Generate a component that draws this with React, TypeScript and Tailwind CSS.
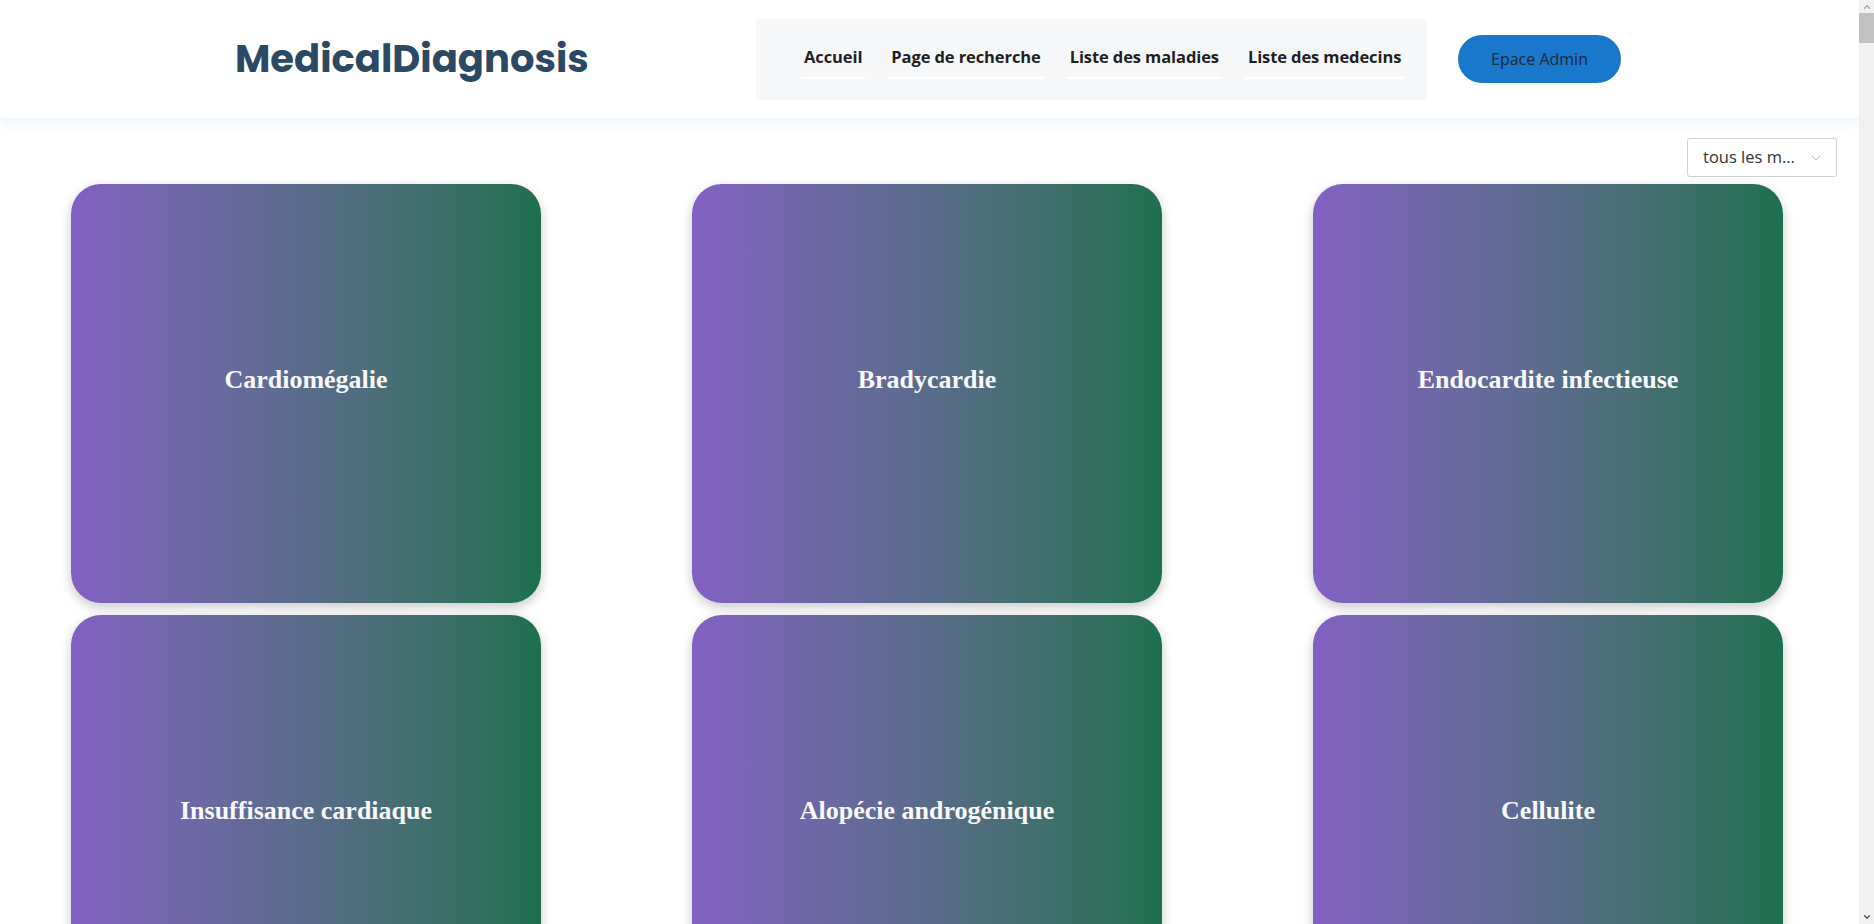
import { ChevronDown, ChevronUp } from "lucide-react";

const maladies = [
  "Cardiomégalie",
  "Bradycardie",
  "Endocardite infectieuse",
  "Insuffisance cardiaque",
  "Alopécie androgénique",
  "Cellulite",
  "Eczéma",
  "Psoriasis",
  "Urticaire",
];

const liens = ["Accueil", "Page de recherche", "Liste des maladies", "Liste des medecins"];

function Header() {
  return (
    <header className="relative z-10 flex h-[118px] items-center bg-white shadow-[0_2px_15px_rgba(25,119,204,0.12)]">
      <div className="w-[756px] shrink-0 pl-[235px]">
        <h1 className="whitespace-nowrap font-['Poppins','Open_Sans',sans-serif] text-[38.5px] font-bold leading-none text-[#2c4964]">
          MedicalDiagnosis
        </h1>
      </div>
      <nav className="flex h-[81px] w-[671px] shrink-0 items-center gap-[23px] bg-[#f6f7f9] pl-[45px] pt-[6px]">
        {liens.map((l) => (
          <a
            key={l}
            href="#"
            className="whitespace-nowrap border-b-2 border-white px-[3px] pb-[7px] font-['Open_Sans',sans-serif] text-[16.5px] font-bold tracking-[-0.1px] text-[#1f1f1f]"
          >
            {l}
          </a>
        ))}
      </nav>
      <button className="ml-[31px] h-[48px] w-[163px] shrink-0 rounded-full bg-[#1977cc] font-['Open_Sans',sans-serif] text-[16px] text-[#1c2a3a]">
        Epace Admin
      </button>
    </header>
  );
}

function Carte({ nom }: { nom: string }) {
  return (
    <div className="flex h-[419px] w-[470px] items-center justify-center rounded-[30px] bg-gradient-to-r from-[#8360c3] to-[#1d6f4f] pb-[28px] shadow-[0_4px_12px_rgba(0,0,0,0.22)]">
      <h2 className="font-['Liberation_Serif',serif] text-[26px] font-bold text-[#f8f8fb]">{nom}</h2>
    </div>
  );
}

// barre de défilement dessinée (fenêtre du navigateur)
function Scrollbar() {
  return (
    <div className="fixed right-0 top-0 z-20 flex h-screen w-[15px] flex-col items-center bg-[#f1f1f1]">
      <ChevronUp size={10} strokeWidth={3} className="mt-[2px] text-[#a3a3a3]" />
      <div className="mt-[1px] h-[30px] w-[15px] bg-[#c1c1c1]" />
      <div className="flex-1" />
      <ChevronDown size={10} strokeWidth={3} className="mb-[2px] text-[#505050]" />
    </div>
  );
}

export default function App() {
  return (
    <div className="min-h-screen overflow-x-hidden bg-white">
      <div className="mr-[15px]">
        <Header />
        <div className="mt-[20px] flex justify-end pr-[22px]">
          <div className="flex h-[39px] w-[150px] items-center justify-between rounded-[3px] border border-[#d2d2d2] bg-white pl-[15px] pr-[12px] font-['Open_Sans',sans-serif] text-[16.5px] text-[#333]">
            <span>tous les m...</span>
            <ChevronDown size={16} strokeWidth={1} className="text-[#999]" />
          </div>
        </div>
        <div className="mt-[7px] flex flex-wrap gap-x-[151px] gap-y-[12px] pb-[40px] pl-[71px]">
          {maladies.map((m) => (
            <Carte key={m} nom={m} />
          ))}
        </div>
      </div>
      <Scrollbar />
    </div>
  );
}
